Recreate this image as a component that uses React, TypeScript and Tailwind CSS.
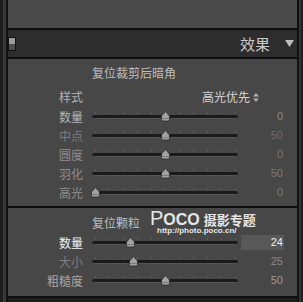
const cjk = { fontFamily: '"Noto Sans CJK SC", "Noto Sans", sans-serif' };

type Row = { label: string; value: string; pos: number; labelColor: string; valueColor: string; active?: boolean };

const vignette: Row[] = [
  { label: "数量", value: "0", pos: 50, labelColor: "text-[#b4b4b4]", valueColor: "text-[#8a8a8a]" },
  { label: "中点", value: "50", pos: 50, labelColor: "text-[#7e7e7e]", valueColor: "text-[#6c6c6c]" },
  { label: "圆度", value: "0", pos: 50, labelColor: "text-[#8e8e8e]", valueColor: "text-[#7a7a7a]" },
  { label: "羽化", value: "50", pos: 50, labelColor: "text-[#8e8e8e]", valueColor: "text-[#7a7a7a]" },
  { label: "高光", value: "0", pos: 2, labelColor: "text-[#8e8e8e]", valueColor: "text-[#7a7a7a]" },
];

const grain: Row[] = [
  { label: "数量", value: "24", pos: 26, labelColor: "text-[#f2f2f2]", valueColor: "text-[#f0f0f0]", active: true },
  { label: "大小", value: "25", pos: 28, labelColor: "text-[#7e7e7e]", valueColor: "text-[#8a8a8a]" },
  { label: "粗糙度", value: "50", pos: 50, labelColor: "text-[#a8a8a8]", valueColor: "text-[#9a9a9a]" },
];

const ticks = [0, 10, 20, 30, 40, 50, 60, 70, 80, 90, 100];

function Slider({ pos }: { pos: number }) {
  return (
    <div className="relative h-full w-[146px]">
      {ticks.map((t) => (
        <div
          key={t}
          className="absolute top-[5px] h-[2px] w-px bg-[#5c5c5c]"
          style={{ left: `${3 + t * 1.4}px` }}
        />
      ))}
      <div className="absolute left-0 right-0 top-[8px] h-[4px] rounded-full bg-[#1b1b1b] border-b border-[#555]" />
      <svg
        className="absolute top-[4px]"
        style={{ left: `${pos * 1.46 - 5}px` }}
        width="11"
        height="11"
        viewBox="0 0 11 11"
      >
        <path d="M5.5 0.5 L9.5 5 L9.5 8.5 Q9.5 10 8 10 L3 10 Q1.5 10 1.5 8.5 L1.5 5 Z" fill="#a3a3a3" stroke="#2a2a2a" strokeWidth="0.8" />
        <path d="M2 7.5 L9 7.5" stroke="#7a7a7a" strokeWidth="1" />
      </svg>
    </div>
  );
}

function SliderRow({ row }: { row: Row }) {
  return (
    <div className="flex h-[19px] items-center">
      <div className={`w-[75px] text-right text-[12px] leading-none ${row.labelColor}`}>{row.label}</div>
      <div className="ml-[9px] h-[19px]">
        <Slider pos={row.pos} />
      </div>
      <div
        className={`ml-[3px] flex h-[15px] w-[43px] items-center justify-end pr-[1px] text-[11px] leading-none ${row.valueColor} ${row.active ? "bg-[#585858]" : ""}`}
        style={{ fontFamily: '"Liberation Sans", sans-serif' }}
      >
        {row.value}
      </div>
    </div>
  );
}

export default function App() {
  return (
    <div className="flex h-[302px] w-[303px] overflow-hidden bg-[#1e1e1e]" style={cjk}>
      <div className="w-[3px] bg-[#1e1e1e]" />
      <div className="w-[3px] bg-[#383838]" />
      <div className="w-[2px] bg-[#111]" />

      <div className="flex w-[289px] flex-col">
        <div className="h-[28px] bg-[#4a4a4a]" />
        <div className="h-[2px] bg-[#0e0e0e]" />

        <div className="flex h-[27px] items-center bg-[#2d2d2d]">
          <div className="flex h-[14px] w-[8px] flex-col border border-[#111]">
            <div className="flex-1 bg-[#9c9c9c]" />
            <div className="flex-1 bg-[#4e4e4e]" />
          </div>
          <div className="ml-auto text-[15px] leading-none text-[#cacaca]">效果</div>
          <svg className="ml-[15px] mr-[3px]" width="9" height="7" viewBox="0 0 9 7">
            <path d="M0 0 L9 0 L4.5 7 Z" fill="#bdbdbd" />
          </svg>
        </div>
        <div className="h-[2px] bg-[#0e0e0e]" />

        <div className="flex flex-col bg-[#474747] pb-[4px] pt-[6px]">
          <div className="ml-[84px] h-[16px] text-[12px] leading-[16px] text-[#bdbdbd]">复位裁剪后暗角</div>
          <div className="mt-[6px] flex h-[20px] items-center">
            <div className="w-[75px] text-right text-[12px] leading-none text-[#b4b4b4]">样式</div>
            <div className="ml-auto flex items-center gap-[3px] pr-[38px] text-[12px] leading-none text-[#d6d6d6]">
              高光优先
              <svg width="6" height="9" viewBox="0 0 6 9">
                <path d="M3 0 L6 3.5 L0 3.5 Z M0 5.5 L6 5.5 L3 9 Z" fill="#b0b0b0" />
              </svg>
            </div>
          </div>
          {vignette.map((r) => (
            <SliderRow key={r.label} row={r} />
          ))}
        </div>
        <div className="h-[2px] bg-[#0e0e0e]" />

        <div className="relative flex flex-col bg-[#474747] pb-[6px] pt-[7px]">
          <div className="ml-[84px] h-[16px] text-[12px] leading-[16px] text-[#bdbdbd]">复位颗粒</div>
          <div className="absolute left-[142px] top-[2px] flex flex-col text-[#e6e6e6]">
            <div className="flex items-end leading-none">
              <span className="text-[20px] leading-[17px]" style={{ fontFamily: '"Liberation Sans", sans-serif' }}>P</span>
              <span className="text-[16px] font-semibold leading-[14px]" style={{ fontFamily: '"Liberation Sans", sans-serif' }}>OCO</span>
              <span className="ml-[4px] text-[13px] font-bold leading-[14px]">摄影专题</span>
            </div>
            <div className="ml-[7px] text-[8px] font-bold leading-[8px]" style={{ fontFamily: '"Liberation Sans", sans-serif' }}>
              http://photo.poco.cn/
            </div>
          </div>
          <div className="mt-[2px]">
            {grain.map((r) => (
              <SliderRow key={r.label} row={r} />
            ))}
          </div>
        </div>
        <div className="h-[2px] bg-[#0e0e0e]" />
      </div>

      <div className="w-[2px] bg-[#111]" />
      <div className="w-[2px] bg-[#343434]" />
      <div className="w-[2px] bg-[#1e1e1e]" />
    </div>
  );
}
